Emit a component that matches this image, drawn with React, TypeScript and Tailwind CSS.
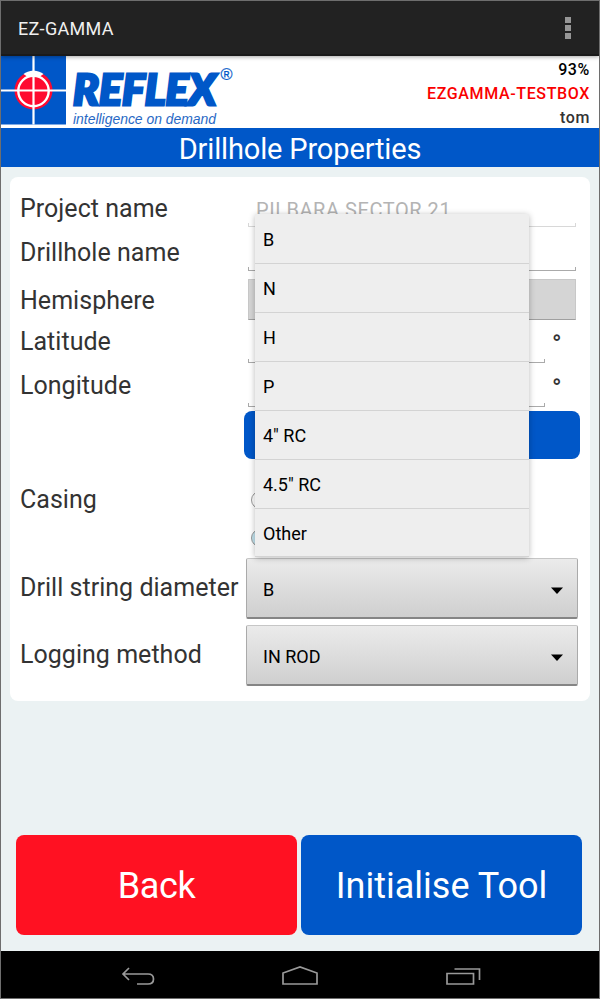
import type { ReactNode } from "react";

const BORE_OPTIONS = ["B", "N", "H", "P", '4" RC', '4.5" RC', "Other"];

function ReflexLogo() {
  return (
    <svg width="240" height="72" viewBox="0 0 240 72" className="block">
      <path d="M0 0H65V68.500H0Z" fill="#0057c8" />
      <circle cx="32.500" cy="34.500" r="19" fill="#ff0a30" />
      <path d="M22.500 18Q26 15 32.500 14.500Q39 15 42.500 18L39 20.500H26Z" fill="#fff" />
      <circle cx="32.500" cy="35" r="15.200" fill="none" stroke="#fff" strokeWidth="2.400" />
      <path d="M32.500 0V68.500M0 34.500H65" stroke="#fff" strokeWidth="2.200" />
      <text x="72" y="49" textLength="143" lengthAdjust="spacingAndGlyphs" fill="#0057c8" stroke="#0057c8" strokeWidth="2.800" fontFamily="Lato, sans-serif" fontWeight="900" fontStyle="italic" fontSize="41.500">REFLEX</text>
      <text x="219.500" y="24" textLength="12" lengthAdjust="spacingAndGlyphs" fill="#0057c8" stroke="#0057c8" strokeWidth=".2" fontFamily="'Liberation Sans', sans-serif" fontSize="16">®</text>
      <text x="72" y="68" textLength="143" lengthAdjust="spacingAndGlyphs" fill="#2868c4" fontFamily="'Liberation Sans', sans-serif" fontStyle="italic" fontSize="15.500">intelligence on demand</text>
    </svg>
  );
}

function Row({ label, className, children }: { label: string; className: string; children?: ReactNode }) {
  return (
    <div className={`flex ${className}`}>
      <div className="flex w-[236px] shrink-0 items-center whitespace-nowrap pl-[10px] text-[25px] tracking-[0.03px]">{label}</div>
      {children}
    </div>
  );
}

function Field({ className, line, children }: { className: string; line: string; children?: ReactNode }) {
  return (
    <div className={`ml-[2px] flex shrink-0 flex-col justify-end ${className}`}>
      <div className="h-[36px] pl-2 pt-[8px] text-[20px] leading-[30px] tracking-[0.55px] text-[#b4b4b4]">{children}</div>
      <div className={`h-[4px] shrink-0 border border-t-0 ${line}`} />
    </div>
  );
}

function Degree() {
  return <span className="pl-[7px] pt-[10px] text-[25px] font-medium leading-[30px]">°</span>;
}

function Spinner({ value }: { value: string }) {
  return (
    <div className="flex h-[61px] w-[332px] items-center justify-between rounded-[2px] border border-t-[#c6c6c6] border-x-[#aaa] border-b-2 border-b-[#858585] bg-linear-to-b from-[#ebebeb] to-[#cfcfcf] pl-[16px] pr-[14px] text-[18px] text-black">
      <span className="pt-[2px]">{value}</span>
      <svg width="12" height="7" viewBox="0 0 12 7" className="mt-[4px]"><path d="M0 .5H12L6 7Z" fill="#000" /></svg>
    </div>
  );
}

function Radio({ checked }: { checked?: boolean }) {
  return (
    <div className={`flex size-[18px] items-center justify-center rounded-full border border-[#999] ${checked ? "bg-[#c3e4ef]" : "bg-white"}`}>
      {checked && <div className="size-[9px] rounded-full bg-[#33b5e5]" />}
    </div>
  );
}

export default function App() {
  return (
    <div className="relative flex h-[999px] w-[600px] flex-col overflow-hidden border border-[#6e6e6e] bg-[#ebf2f3] font-[Roboto,sans-serif] text-[#333]">
      <header className="z-10 flex h-[55px] shrink-0 items-center justify-between border-b-2 border-[#1a1a1a] bg-[#222] pl-[17px] pr-[28px] shadow-[0_1px_4px_rgba(0,0,0,0.35)]">
        <span className="pt-[2px] text-[18px] tracking-[0.3px] text-[#f0f0f0]">EZ-GAMMA</span>
        <div className="flex flex-col gap-[2px]">
          <i className="size-[6px] bg-[#969696]" />
          <i className="size-[6px] bg-[#969696]" />
          <i className="size-[6px] bg-[#969696]" />
        </div>
      </header>
      <div className="flex h-[72px] shrink-0 justify-between bg-white pr-[9px]">
        <ReflexLogo />
        <div className="flex flex-col pt-[2px] text-right text-[16px] font-medium leading-[24px] tracking-[0.63px]">
          <span className="text-black">93%</span>
          <span className="text-[#fa0000]">EZGAMMA-TESTBOX</span>
          <span>tom</span>
        </div>
      </div>
      <h1 className="flex h-[39px] shrink-0 items-center justify-center bg-[#0057c8] pt-[4px] text-[29px] tracking-[-0.15px] text-white">Drillhole Properties</h1>
      <main className="mx-[9px] mt-[10px] h-[524px] shrink-0 rounded-[8px] bg-white pt-[10px]">
        <Row label="Project name" className="h-[44px]">
          <Field className="h-[40px] w-[328px]" line="border-[#d8d8d8]">PILBARA SECTOR 21</Field>
        </Row>
        <Row label="Drillhole name" className="h-[44px]">
          <Field className="h-[40px] w-[328px]" line="border-[#aaa]" />
        </Row>
        <Row label="Hemisphere" className="h-[45px] pt-[4px] *:first:pt-[2px]">
          <div className="ml-[2px] h-[41px] w-[328px] border border-[#c8c8c8] border-b-[#a0a0a0] bg-[#d5d5d5]" />
        </Row>
        <Row label="Latitude" className="h-[44px]">
          <Field className="h-[43px] w-[297px]" line="border-[#aaa]" />
          <Degree />
        </Row>
        <Row label="Longitude" className="h-[44px]">
          <Field className="h-[43px] w-[297px]" line="border-[#aaa]" />
          <Degree />
        </Row>
        <div className="ml-[234px] mt-[3px] h-[48px] w-[336px] rounded-[8px] bg-[#0057c8]" />
        <div className="flex h-[99px] pt-[22px]">
          <Row label="Casing" className="h-[38px]" />
          <div className="ml-[5px] flex flex-col gap-[20px] pt-[10px]">
            <Radio />
            <Radio checked />
          </div>
        </div>
        <Row label="Drill string diameter" className="mb-[6px] h-[61px] *:first:pb-[2px]"><Spinner value="B" /></Row>
        <Row label="Logging method" className="h-[61px] *:first:pb-[2px]"><Spinner value="IN ROD" /></Row>
      </main>
      <div className="mx-[15px] mt-[134px] flex shrink-0 gap-[4px] text-[36px] text-white">
        <button className="h-[100px] w-[281px] rounded-[8px] bg-[#ff1122] pt-[2px] tracking-[-0.4px]">Back</button>
        <button className="h-[100px] w-[281px] rounded-[8px] bg-[#0057c8] pt-[2px]">Initialise Tool</button>
      </div>
      <nav className="mt-[16px] flex h-[47px] shrink-0 items-center bg-black">
        <svg width="598" height="47" viewBox="0 0 598 47" fill="none" stroke="#999" strokeWidth="1.700">
          <path d="M128 17L122 23L128 29M122 23H147Q152.500 23 152.500 28Q152.500 33 147 33H136" />
          <path d="M282 33V22L299 16L316 22V33Z" />
          <path d="M446 22.500H472.500V33H446ZM453.500 18H478.500V29" />
        </svg>
      </nav>
      <ul className="absolute left-[254px] top-[213px] z-20 w-[274px] rounded-[2px] bg-[#eee] pt-px text-[18px] text-black shadow-[0_1px_6px_rgba(0,0,0,0.28)]">
        {BORE_OPTIONS.map((option) => (
          <li key={option} className="flex h-[49px] items-center border-b border-[#d3d3d3] pl-[8px] last:h-[48px] last:pt-[2px]">{option}</li>
        ))}
      </ul>
    </div>
  );
}
